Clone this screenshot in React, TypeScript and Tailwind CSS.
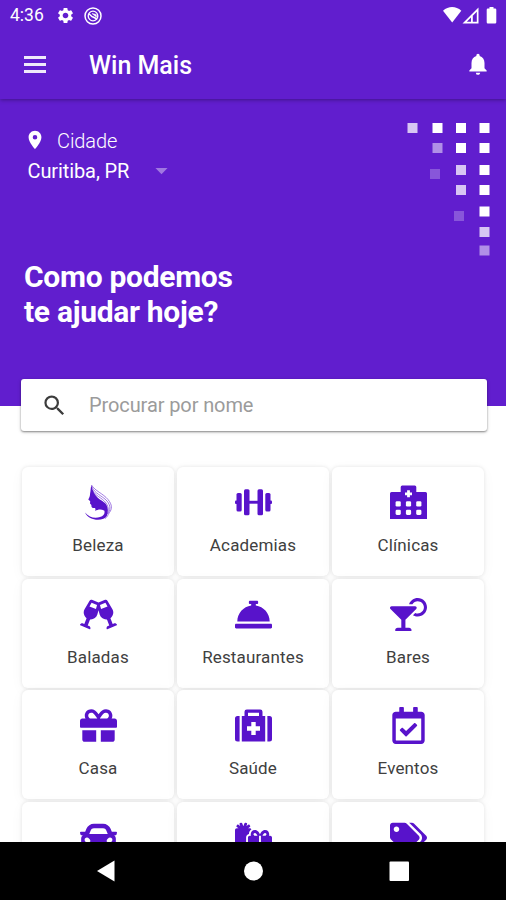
import type { ReactNode } from "react";
import {
  FaCar,
  FaCocktail,
  FaConciergeBell,
  FaGift,
  FaGifts,
  FaGlassCheers,
  FaRegCalendarCheck,
  FaTags,
} from "react-icons/fa";
import { MdArrowDropDown, MdNotifications, MdPlace, MdSearch, MdSettings } from "react-icons/md";

const ICON = "h-[37px] w-[37px]";

function BeautyIcon() {
  return (
    <svg viewBox="0 0 37 37" className={ICON} fill="currentColor">
      <path d="M11.5 1C10.4 4 10.8 7 10.1 9.6C10 12 9.4 13.7 8.3 15.6L10.2 17.2L10 19.6L11.4 21C11.2 23.4 12.3 24.3 15 24C15.6 25 15.5 26 15.2 27C18 25 21.5 25 24 26.5C26 28 26 31.5 23 34C28 32.5 29 26 26.5 21C24.5 17.5 20.5 16.5 17.5 13.5C14 10 12 6 11.5 1Z" />
      <path d="M5 28.5C9 33.5 15 34.7 20 33C23.8 31.7 25 29.4 24.4 27C28.3 29 27.7 33 23.4 34.8C17 37.2 8 35 5 28.5Z" />
      <g fill="none" stroke="currentColor" strokeWidth="0.8" opacity="0.7">
        <path d="M11.5 1C15 7 23 9.5 28 15.5C32.5 21 32 25 29.5 28.5C27.5 31 28 32.500 25 34.5" />
        <path d="M12 3C14.5 9.5 22 11.5 27 17C31 22 30.5 26 27.5 30" />
        <path d="M12.5 6C15 12 22 13.5 26 19C29 23.5 29 28 26 32" />
      </g>
    </svg>
  );
}

function DumbbellIcon() {
  return (
    <svg viewBox="0 0 37 37" className={ICON} fill="currentColor">
      <rect x="0" y="16.5" width="3" height="3.5" rx="1" />
      <rect x="34" y="16.5" width="3" height="3.5" rx="1" />
      <rect x="1.500" y="9" width="5.2" height="18.5" rx="1.5" />
      <rect x="30.3" y="9" width="5.2" height="18.5" rx="1.5" />
      <rect x="9" y="5.2" width="5.5" height="26" rx="1.5" />
      <rect x="22.5" y="5.2" width="5.5" height="26" rx="1.5" />
      <rect x="14" y="16.8" width="9" height="2.9" />
    </svg>
  );
}

function ClinicIcon() {
  return (
    <svg viewBox="0 0 37 37" className={ICON}>
      <path
        fill="currentColor"
        d="M1.5 8H10.7V3A1.5 1.5 0 0 1 12.2 1.5H24.8A1.5 1.5 0 0 1 26.3 3V8H35.5A1.5 1.5 0 0 1 37 9.5V35H0V9.5A1.5 1.5 0 0 1 1.5 8Z"
      />
      <g fill="white">
        <path d="M17.100 6.300h2.800v2.100H22v2.800h-2.100v2.100h-2.800v-2.100H15V8.400h2.100z" />
        {[5.6, 15.9, 26.2].map((x) => (
          <g key={x}>
            <rect x={x} y="17.3" width="5.2" height="5.2" rx="1.3" />
            <rect x={x} y="25.7" width="5.2" height="5.2" rx="1.3" />
          </g>
        ))}
      </g>
    </svg>
  );
}

function MedicalBagIcon() {
  return (
    <svg viewBox="0 0 37 37" className={ICON}>
      <g fill="currentColor">
        <path d="M4.6 9V34.5H2.5A2.5 2.5 0 0 1 0 32V11.5A2.5 2.5 0 0 1 2.5 9Z" />
        <path d="M32.4 9V34.5H34.5A2.5 2.5 0 0 0 37 32V11.5A2.5 2.5 0 0 0 34.5 9Z" />
        <path
          fillRule="evenodd"
          d="M6.8 9H9.5V4.7A2.3 2.3 0 0 1 11.8 2.4H25.2A2.3 2.3 0 0 1 27.5 4.7V9H30.2V34.5H6.8ZM13 5.7V9H24V5.7Z"
        />
      </g>
      <path fill="white" d="M16.3 15h4.4v4.3H25v4.4h-4.3V28h-4.4v-4.3H12v-4.4h4.3z" />
    </svg>
  );
}

// The last row is mostly below the navigation bar, so it only shows icons
const categories: { id: string; label?: string; icon: ReactNode }[] = [
  { id: "beauty", label: "Beleza", icon: <BeautyIcon /> },
  { id: "gym", label: "Academias", icon: <DumbbellIcon /> },
  { id: "clinic", label: "Clínicas", icon: <ClinicIcon /> },
  { id: "club", label: "Baladas", icon: <FaGlassCheers className={ICON} /> },
  { id: "restaurant", label: "Restaurantes", icon: <FaConciergeBell className={ICON} /> },
  { id: "bar", label: "Bares", icon: <FaCocktail className={ICON} /> },
  { id: "home", label: "Casa", icon: <FaGift className={ICON} /> },
  { id: "health", label: "Saúde", icon: <MedicalBagIcon /> },
  { id: "events", label: "Eventos", icon: <FaRegCalendarCheck className={ICON} /> },
  { id: "car", icon: <FaCar className={ICON} /> },
  { id: "gifts", icon: <FaGifts className={ICON} /> },
  { id: "tags", icon: <FaTags className={ICON} /> },
];

// x, y, opacity
const dots = [
  [0, 0, 0.75], [25, 0, 1], [48.5, 0, 1], [72, 0, 1],
  [25, 20, 0.5], [48.5, 20, 1], [72, 20, 1],
  [22.5, 46, 0.25], [48.5, 42, 0.75], [72, 42, 1],
  [48.5, 62, 0.75], [72, 62, 1],
  [46.5, 88, 0.25], [72, 83.5, 1],
  [72, 104, 0.75],
  [72, 122.5, 0.5],
];

function StatusBar() {
  return (
    <div className="flex h-[30px] items-center justify-between pl-[10px] pr-[8px]">
      <div className="flex items-center pt-[1px]">
        <span className="w-[46px] pt-[1px] text-[17.5px] leading-none">4:36</span>
        <MdSettings className="h-[19px] w-[19px]" />
        <svg viewBox="0 0 18 18" className="ml-[9px] h-[18px] w-[18px]" fill="none" stroke="currentColor">
          <circle cx="9" cy="9" r="8" strokeWidth="1.5" />
          <circle cx="9" cy="9" r="4.8" strokeWidth="1.3" />
          <path d="M4.5 7C6.5 7.3 7 9.5 9 10C10.5 10.5 11.5 11 13 12.5" strokeWidth="1.5" />
          <path d="M8 6.5l4.2.9.3 2.800z" fill="currentColor" strokeWidth="0.5" />
        </svg>
      </div>
      <svg viewBox="0 0 56 18" className="h-[18px] w-[56px]" fill="currentColor">
        <path d="M1 4.7C6.5-.2 13.800-.2 19.3 4.7L10.2 16.5Z" />
        <path fillRule="evenodd" d="M20.5 17.5L36.5 1.5V17.5ZM24.8 15.7H29V11.5ZM30.8 15.7H34.8V5.8L30.8 9.8Z" />
        <path d="M44.7 3.7a1.2 1.2 0 0 1 1.2-1.2H47.5V1.1h4V2.5h1.6a1.2 1.2 0 0 1 1.2 1.2V16.3a1.2 1.2 0 0 1-1.2 1.2H45.9a1.2 1.2 0 0 1-1.2-1.2Z" />
      </svg>
    </div>
  );
}

function AppBar() {
  return (
    <div className="flex h-[69px] items-center pl-[23.5px] pr-[15px]">
      <button type="button" aria-label="Menu" className="flex w-[22.5px] flex-col gap-[4px]">
        <span className="h-[3px] w-full bg-white/90" />
        <span className="h-[3px] w-full bg-white/90" />
        <span className="h-[3px] w-full bg-white/90" />
      </button>
      <h1 className="ml-[43px] flex-1 pt-[1px] text-[25px] font-medium leading-none">Win Mais</h1>
      <MdNotifications className="-mt-[1px] h-[26px] w-[26px]" />
    </div>
  );
}

function Hero() {
  return (
    <section className="relative h-[307px] bg-[#611ece] pt-[30px]">
      <svg viewBox="0 0 84 134" className="absolute right-[15px] top-[24px] h-[134px] w-[84px]" fill="white">
        {dots.map(([x, y, opacity]) => (
          <rect key={`${x}-${y}`} x={x + 0.5} y={y} width="10" height="10" opacity={opacity} />
        ))}
      </svg>
      <div className="flex h-[23px] items-center pl-[24px]">
        <MdPlace className="-mt-[2px] h-[22px] w-[22px]" />
        <span className="ml-[11px] text-[20px] font-light leading-none tracking-[-0.1px]">Cidade</span>
      </div>
      <div className="flex h-[38px] items-center pl-[27.5px]">
        <span className="w-[119.5px] text-[20px] leading-none tracking-[-0.1px]">Curitiba, PR</span>
        <MdArrowDropDown className="-mt-[1px] h-[29px] w-[29px] opacity-40" />
      </div>
      <h2 className="mt-[69px] pl-[24px] text-[30px] font-bold leading-[35px] tracking-[-0.3px]">
        Como podemos
        <br />
        te ajudar hoje?
      </h2>
    </section>
  );
}

function SearchBox() {
  return (
    <div className="relative -mt-[27px] ml-[21px] mr-[19px] flex h-[52px] items-center rounded-[3px] bg-white pl-[20px] shadow-[0_1px_2px_rgba(0,0,0,0.4),0_1px_4px_rgba(0,0,0,0.15)]">
      <MdSearch className="h-[27px] w-[27px] text-[#3c3c3c]" />
      <span className="-mt-[1px] ml-[21px] text-[20px] leading-none tracking-[-0.1px] text-[#9b9b9b]">
        Procurar por nome
      </span>
    </div>
  );
}

function CategoryGrid() {
  return (
    <div className="ml-[22px] mt-[36px] grid w-[462px] auto-rows-[109px] grid-cols-3 gap-x-[3px] gap-y-[2.5px]">
      {categories.map(({ id, label, icon }) => (
        <div
          key={id}
          className="flex flex-col items-center rounded-[6px] bg-white pt-[17px] text-[#5813cb] shadow-[0_0_3px_1px_rgba(0,0,0,0.06),0_3px_14px_rgba(0,0,0,0.04)]"
        >
          {icon}
          {label && (
            <span className="mt-[14px] text-[17px] leading-[20px] tracking-[0.15px] text-[#404040]">{label}</span>
          )}
        </div>
      ))}
    </div>
  );
}

function NavBar() {
  return (
    <nav className="h-[58px] shrink-0 bg-black text-white">
      <svg viewBox="0 0 506 58" className="h-[58px] w-full" fill="currentColor">
        <path d="M97 29L114.5 18.5V39.5Z" />
        <circle cx="253.5" cy="29" r="9.5" />
        <rect x="389.5" y="19.5" width="19.5" height="19.5" rx="1" />
      </svg>
    </nav>
  );
}

export default function App() {
  return (
    <div className="flex h-[900px] w-[506px] flex-col overflow-hidden bg-white font-['Roboto',sans-serif]">
      <main className="min-h-0 flex-1 overflow-hidden">
        <div className="text-white">
          <header className="relative z-10 bg-[#611ece] shadow-[0_1px_4px_rgba(0,0,0,0.35)]">
            <StatusBar />
            <AppBar />
          </header>
          <Hero />
        </div>
        <SearchBox />
        <CategoryGrid />
      </main>
      <NavBar />
    </div>
  );
}
